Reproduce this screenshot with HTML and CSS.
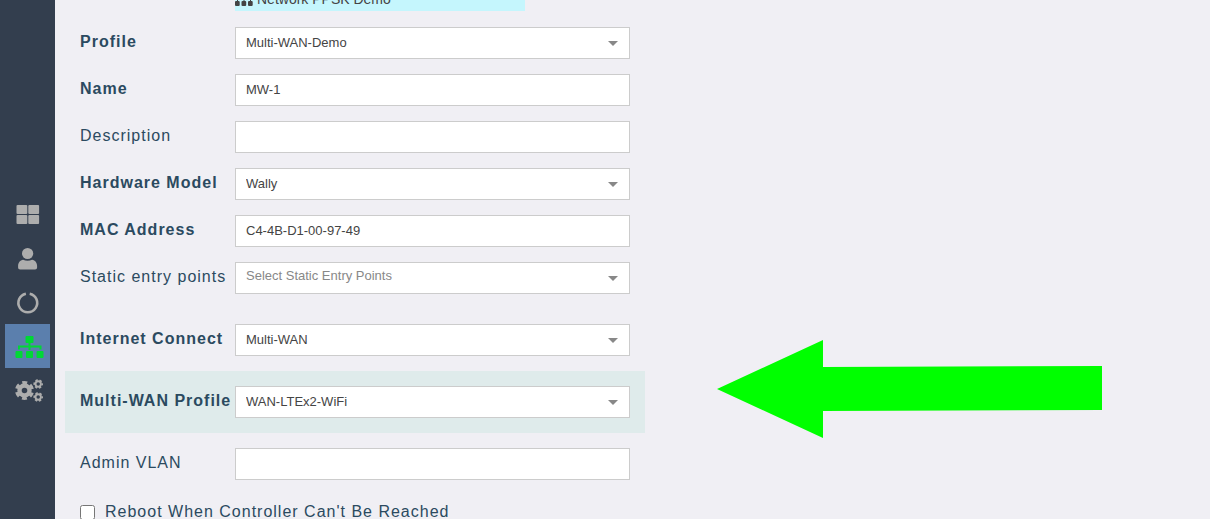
FILE: index.html
```html
<!DOCTYPE html>
<html lang="en">
<head>
<meta charset="utf-8">
<meta name="viewport" content="width=device-width, initial-scale=1">
<title>Device configuration</title>
<link rel="stylesheet" href="styles.css">
</head>
<body>
<div class="app">
  <nav class="sidebar" aria-label="Main">
    <a class="nav-item" href="#dashboard" aria-label="Dashboard">
      <svg class="nav-icon" viewBox="0 0 30 30"><g fill="currentColor"><rect x="3.500" y="6" width="10.800" height="9" rx="1"/><rect x="15.300" y="6" width="10.800" height="9" rx="1"/><rect x="3.500" y="16" width="10.800" height="9" rx="1"/><rect x="15.300" y="16" width="10.800" height="9" rx="1"/></g></svg>
    </a>
    <a class="nav-item" href="#users" aria-label="Users">
      <svg class="nav-icon" viewBox="0 0 30 30"><g fill="currentColor" transform="translate(-.4 1)"><circle cx="15" cy="9.500" r="5.600"/><path d="M10.500 15.700c2.800 1.400 6.200 1.400 9 0 3 .3 5 3 5 6.300v1.500c0 1.200-.8 2-2 2h-15c-1.200 0-2-.8-2-2v-1.500c0-3.300 2-6 5-6.300z"/></g></svg>
    </a>
    <a class="nav-item" href="#status" aria-label="Status">
      <svg class="nav-icon" viewBox="0 0 30 30"><path d="M16.700 6.700a9.400 9.400 0 1 1-3.800 0" fill="none" stroke="currentColor" stroke-width="2.600"/></svg>
    </a>
    <a class="nav-item active" href="#network" aria-label="Network" aria-current="page">
      <svg class="nav-icon" viewBox="0 0 30 30"><g fill="currentColor"><rect x="12.500" y="5" width="8" height="7" rx="1"/><rect x="2.500" y="20" width="7" height="7" rx="1"/><rect x="13" y="20" width="7" height="7" rx="1"/><rect x="23.500" y="20" width="7" height="7" rx="1"/></g><path d="M16.500 11v8M6 18.500v-3h21.500v3" fill="none" stroke="currentColor" stroke-width="2"/></svg>
    </a>
    <a class="nav-item" href="#settings" aria-label="Settings">
      <svg class="nav-icon" viewBox="0 0 30 30"><g fill="none" stroke="currentColor"><circle cx="11.500" cy="15.500" r="5" stroke-width="4.400"/><circle cx="11.500" cy="15.500" r="8" stroke-width="3" stroke-dasharray="4.800 3.578" stroke-dashoffset="2.400" transform="rotate(30 11.500 15.500)"/><circle cx="25.200" cy="9" r="2.700" stroke-width="1.900"/><circle cx="25.200" cy="9" r="4" stroke-width="1.600" stroke-dasharray="2.400 1.789" stroke-dashoffset="1.200"/><circle cx="25.200" cy="22" r="2.700" stroke-width="1.900"/><circle cx="25.200" cy="22" r="4" stroke-width="1.600" stroke-dasharray="2.400 1.789" stroke-dashoffset="1.200"/></g></svg>
    </a>
  </nav>
  <main class="content">
    <form class="form">
      <div class="tree-item">
        <svg class="tree-icon" viewBox="0 0 18 14"><g fill="currentColor"><rect x="6.500" y="0" width="5" height="4"/><rect x="0" y="9" width="4.700" height="5" rx="1"/><rect x="6.500" y="9" width="4.700" height="5" rx="1"/><rect x="13" y="9" width="4.700" height="5" rx="1"/></g><path d="M9 4v5M2.500 9v-2h13v2" fill="none" stroke="currentColor"/></svg>
        <span>Network PPSK Demo</span>
      </div>
      <div class="row">
        <label class="label required" for="profile">Profile</label>
        <select class="field select" id="profile"><option>Multi-WAN-Demo</option></select>
      </div>
      <div class="row">
        <label class="label required" for="name">Name</label>
        <input class="field" id="name" type="text" value="MW-1">
      </div>
      <div class="row">
        <label class="label" for="description">Description</label>
        <input class="field" id="description" type="text">
      </div>
      <div class="row">
        <label class="label required" for="model">Hardware Model</label>
        <select class="field select" id="model"><option>Wally</option></select>
      </div>
      <div class="row">
        <label class="label required" for="mac">MAC Address</label>
        <input class="field" id="mac" type="text" value="C4-4B-D1-00-97-49">
      </div>
      <div class="row">
        <label class="label" for="entry">Static entry points</label>
        <select class="field select placeholder" id="entry"><option>Select Static Entry Points</option></select>
      </div>
      <div class="row section">
        <label class="label required" for="internet">Internet Connect</label>
        <select class="field select" id="internet"><option>Multi-WAN</option></select>
      </div>
      <div class="row section highlight">
        <label class="label required" for="wan">Multi-WAN Profile</label>
        <select class="field select" id="wan"><option>WAN-LTEx2-WiFi</option></select>
      </div>
      <div class="row section">
        <label class="label" for="vlan">Admin VLAN</label>
        <input class="field" id="vlan" type="text">
      </div>
      <div class="check-row">
        <input class="checkbox" id="reboot" type="checkbox">
        <label class="check-label" for="reboot">Reboot When Controller Can't Be Reached</label>
      </div>
    </form>
    <svg class="pointer" viewBox="0 0 385 98" aria-hidden="true"><path d="M0 49L106 0v27L385 26v44L106 71v27z" fill="#00ff00"/></svg>
  </main>
</div>
</body>
</html>
```
FILE: styles.css
```css
* {
  box-sizing: border-box;
}

body {
  margin: 0;
  background: #f0eff4;
  color: #2b4a60;
  font: 16px/20px "Liberation Sans", Arial, sans-serif;
}

.app {
  display: flex;
  height: 100vh;
  overflow: hidden;
}

.sidebar {
  flex: 0 0 55px;
  display: flex;
  flex-direction: column;
  padding: 192px 5px 0;
  background: #333e4e;
}

.nav-item {
  display: flex;
  flex: 0 0 44px;
  align-items: center;
  justify-content: center;
  color: #adadad;
}

.nav-item.active {
  background: #5b7fad;
  color: #00d836;
}

.nav-icon {
  width: 30px;
  height: 30px;
  overflow: visible;
}

.content {
  flex: 1;
  display: flex;
  align-items: flex-start;
  gap: 72px;
  padding: 0 10px;
}

.form {
  flex: 0 1 580px;
  min-width: 0;
}

/* The selected tree entry is scrolled partly out of view. */
.tree-item {
  display: flex;
  align-items: center;
  gap: 4px;
  width: 50%;
  height: 26px;
  margin: -15px 0 16px 170px;
  padding-top: 2px;
  background: #c5f6fd;
  color: #444;
  font-size: 14px;
}

.tree-icon {
  width: 18px;
  height: 14px;
}

.row {
  display: flex;
  align-items: flex-start;
  padding: 0 15px 15px;
}

.section {
  padding-top: 15px;
}

.highlight {
  background: #dfebeb;
}

.label {
  flex: 0 0 155px;
  padding-top: 5px;
  letter-spacing: 1px;
  white-space: nowrap;
}

.required {
  font-weight: bold;
}

.field {
  flex: 1;
  min-width: 0;
  height: 32px;
  padding: 0 10px 2px;
  border: 1px solid #ccc;
  border-radius: 0;
  background: #fff;
  color: #444;
  font: 13px/20px "Liberation Sans", Arial, sans-serif;
}

.select {
  appearance: none;
  padding-bottom: 0;
  background: #fff url("data:image/svg+xml,%3Csvg xmlns='http://www.w3.org/2000/svg' width='10' height='5'%3E%3Cpath d='M0 0h10L5 5z' fill='%23888'/%3E%3C/svg%3E") no-repeat right 11px top 13px;
}

.placeholder {
  padding-bottom: 4px;
  color: #888;
}

.check-row {
  display: flex;
  align-items: center;
  gap: 10px;
  padding: 7px 15px;
}

.checkbox {
  width: 15px;
  height: 15px;
  margin: 0;
}

.check-label {
  letter-spacing: 1px;
}

.pointer {
  flex: 0 1 385px;
  min-width: 0;
  margin-top: 340px;
}
```
